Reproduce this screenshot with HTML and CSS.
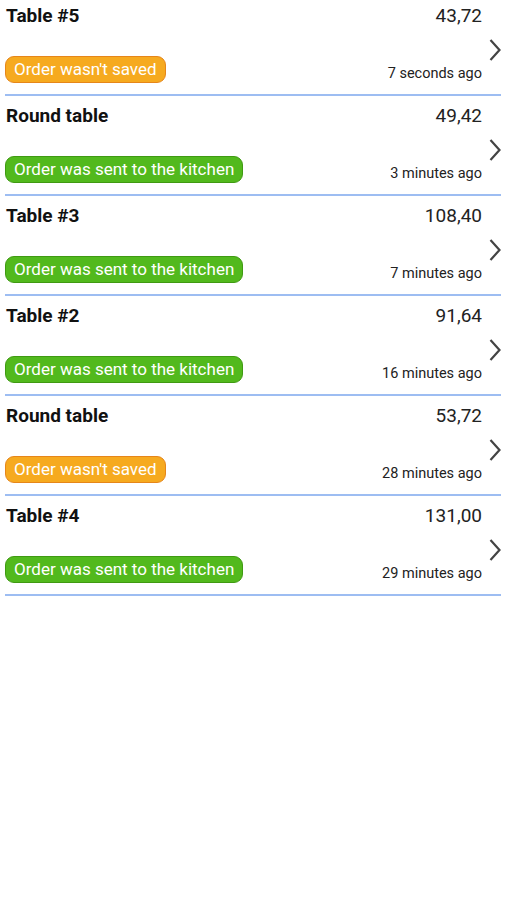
FILE: index.html
```html
<!DOCTYPE html>
<html lang="en">
<head>
    <meta charset="UTF-8">
    <meta name="viewport" content="width=device-width, initial-scale=1.0">
    <title>Orders</title>
    <link rel="stylesheet" href="styles.css">
</head>
<body>
    <div class="orders">
        <div class="order">
            <div class="main">
                <div class="top">
                    <span class="title">Table #5</span>
                    <span class="price">43,72</span>
                </div>
                <div class="bottom">
                    <span class="badge badge-warn">Order wasn't saved</span>
                    <span class="time">7 seconds ago</span>
                </div>
            </div>
            <svg class="chevron" width="12" height="22" viewBox="0 0 12 22"><polyline points="1.5,1 10.5,11 1.5,21" /></svg>
        </div>
        <div class="order">
            <div class="main">
                <div class="top">
                    <span class="title">Round table</span>
                    <span class="price">49,42</span>
                </div>
                <div class="bottom">
                    <span class="badge badge-ok">Order was sent to the kitchen</span>
                    <span class="time">3 minutes ago</span>
                </div>
            </div>
            <svg class="chevron" width="12" height="22" viewBox="0 0 12 22"><polyline points="1.5,1 10.5,11 1.5,21" /></svg>
        </div>
        <div class="order">
            <div class="main">
                <div class="top">
                    <span class="title">Table #3</span>
                    <span class="price">108,40</span>
                </div>
                <div class="bottom">
                    <span class="badge badge-ok">Order was sent to the kitchen</span>
                    <span class="time">7 minutes ago</span>
                </div>
            </div>
            <svg class="chevron" width="12" height="22" viewBox="0 0 12 22"><polyline points="1.5,1 10.5,11 1.5,21" /></svg>
        </div>
        <div class="order">
            <div class="main">
                <div class="top">
                    <span class="title">Table #2</span>
                    <span class="price">91,64</span>
                </div>
                <div class="bottom">
                    <span class="badge badge-ok">Order was sent to the kitchen</span>
                    <span class="time">16 minutes ago</span>
                </div>
            </div>
            <svg class="chevron" width="12" height="22" viewBox="0 0 12 22"><polyline points="1.5,1 10.5,11 1.5,21" /></svg>
        </div>
        <div class="order">
            <div class="main">
                <div class="top">
                    <span class="title">Round table</span>
                    <span class="price">53,72</span>
                </div>
                <div class="bottom">
                    <span class="badge badge-warn">Order wasn't saved</span>
                    <span class="time">28 minutes ago</span>
                </div>
            </div>
            <svg class="chevron" width="12" height="22" viewBox="0 0 12 22"><polyline points="1.5,1 10.5,11 1.5,21" /></svg>
        </div>
        <div class="order">
            <div class="main">
                <div class="top">
                    <span class="title">Table #4</span>
                    <span class="price">131,00</span>
                </div>
                <div class="bottom">
                    <span class="badge badge-ok">Order was sent to the kitchen</span>
                    <span class="time">29 minutes ago</span>
                </div>
            </div>
            <svg class="chevron" width="12" height="22" viewBox="0 0 12 22"><polyline points="1.5,1 10.5,11 1.5,21" /></svg>
        </div>
    </div>
</body>
</html>
```

FILE: styles.css
```css
body {
    margin: 0;
    background: #fff;
    font-family: Roboto, "Noto Sans", sans-serif;
    color: #111;
}

.orders {
    display: flex;
    flex-direction: column;
}

.order {
    display: flex;
    margin: 0 5px;
    padding: 9px 0 11px;
    border-bottom: 2px solid #9dbdf2;
    gap: 7px;
}

.order:first-child {
    padding-top: 5px;
}

.main {
    flex: 1;
    height: 78px;
    display: flex;
    flex-direction: column;
    justify-content: space-between;
}

.top,
.bottom {
    display: flex;
    justify-content: space-between;
}

.bottom {
    align-items: flex-end;
}

.title {
    font-size: 19px;
    line-height: 22px;
    font-weight: bold;
    padding-left: 1px;
}

.price {
    font-size: 19px;
    line-height: 22px;
    color: #222;
}

.time {
    font-size: 14.5px;
    line-height: 17px;
    color: #222;
    padding-bottom: 1px;
}

.badge {
    font-size: 17px;
    line-height: 19px;
    padding: 3px 8px;
    border-radius: 9px;
    color: #fff;
}

.badge-warn {
    background: #f6aa1f;
    border: 1px solid #e6861a;
}

.badge-ok {
    background: #52b91d;
    border: 1px solid #3f9a12;
}

.chevron {
    margin-top: 34px;
    flex: none;
}

.chevron polyline {
    fill: none;
    stroke: #444;
    stroke-width: 2.2;
}
```
